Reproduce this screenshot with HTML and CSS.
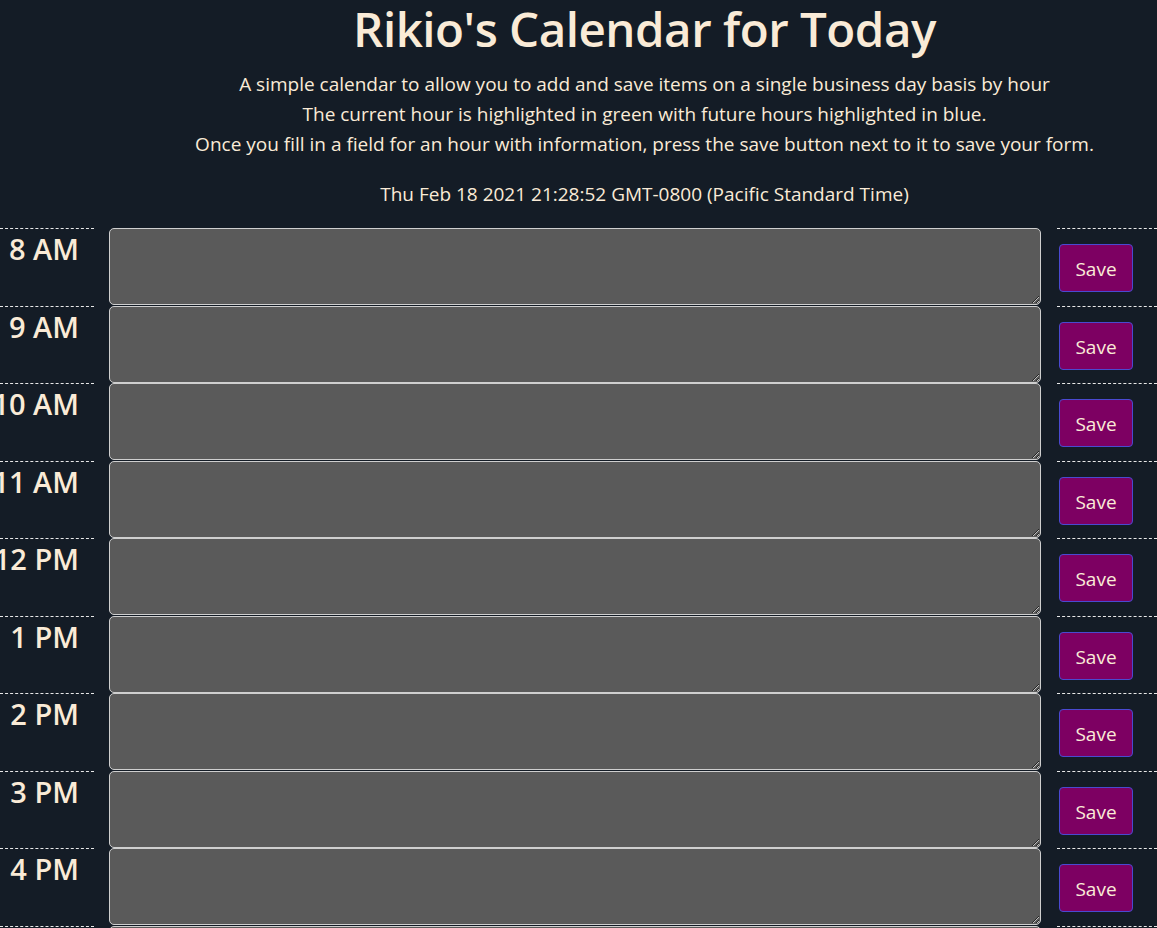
FILE: index.html
```html
<!DOCTYPE html>
<html lang="en">
<head>
<meta charset="utf-8">
<title>Rikio's Calendar</title>
<link rel="stylesheet" href="styles.css">
</head>
<body>
<header class="header">
  <h1 class="title">Rikio's Calendar for Today</h1>
  <p class="lead">A simple calendar to allow you to add and save items on a single business day basis by hour</p>
  <p class="lead">The current hour is highlighted in green with future hours highlighted in blue.</p>
  <p class="lead">Once you fill in a field for an hour with information, press the save button next to it to save your form.</p>
  <p class="date">Thu Feb 18 2021 21:28:52 GMT-0800 (Pacific Standard Time)</p>
</header>
<main class="planner">
  <div class="row"><div class="hour"><span>8 AM</span></div><textarea class="entry"></textarea><div class="save-col"><button class="save">Save</button></div></div>
  <div class="row"><div class="hour"><span>9 AM</span></div><textarea class="entry"></textarea><div class="save-col"><button class="save">Save</button></div></div>
  <div class="row"><div class="hour"><span>10 AM</span></div><textarea class="entry"></textarea><div class="save-col"><button class="save">Save</button></div></div>
  <div class="row"><div class="hour"><span>11 AM</span></div><textarea class="entry"></textarea><div class="save-col"><button class="save">Save</button></div></div>
  <div class="row"><div class="hour"><span>12 PM</span></div><textarea class="entry"></textarea><div class="save-col"><button class="save">Save</button></div></div>
  <div class="row"><div class="hour"><span>1 PM</span></div><textarea class="entry"></textarea><div class="save-col"><button class="save">Save</button></div></div>
  <div class="row"><div class="hour"><span>2 PM</span></div><textarea class="entry"></textarea><div class="save-col"><button class="save">Save</button></div></div>
  <div class="row"><div class="hour"><span>3 PM</span></div><textarea class="entry"></textarea><div class="save-col"><button class="save">Save</button></div></div>
  <div class="row"><div class="hour"><span>4 PM</span></div><textarea class="entry"></textarea><div class="save-col"><button class="save">Save</button></div></div>
  <div class="row"><div class="hour"><span>5 PM</span></div><textarea class="entry"></textarea><div class="save-col"><button class="save">Save</button></div></div>
</main>
</body>
</html>
```
FILE: styles.css
```css
html, body {
  margin: 0;
  padding: 0;
  background: #141c26;
  color: #faebd7;
  font-family: "Open Sans", "Noto Sans", sans-serif;
  overflow: hidden;
}

.header {
  padding-left: 132px;
  text-align: center;
}

.title {
  margin: 0;
  font-size: 47.5px;
  font-weight: 600;
  line-height: 58px;
  letter-spacing: -0.5px;
}

.lead {
  margin: 0;
  font-size: 19px;
  line-height: 30px;
}

.lead:first-of-type {
  margin-top: 11px;
}

.date {
  margin: 20px 0 0;
  font-size: 19px;
  line-height: 30px;
  padding-bottom: 19px;
}

.planner {
  display: flex;
  flex-direction: column;
}

.row {
  display: flex;
  height: 77.5px;
}

.hour {
  width: 94px;
  flex: none;
  box-sizing: border-box;
  border-top: 1px dashed #e8e8e8;
  padding-right: 15px;
  padding-top: 1px;
  display: flex;
  justify-content: flex-end;
  align-items: flex-start;
  white-space: nowrap;
  font-size: 29px;
  font-weight: 600;
  line-height: 38px;
}

.entry {
  flex: 1;
  margin: 0 16px 0 15px;
  box-sizing: border-box;
  height: 77px;
  background: #5a5a5a;
  border: 1px solid #cfcfcf;
  border-radius: 5px;
  color: #faebd7;
  font: inherit;
  padding: 6px 12px;
}

.save-col {
  width: 100px;
  flex: none;
  box-sizing: border-box;
  border-top: 1px dashed #e8e8e8;
  padding: 15px 0 0 2px;
}

.save {
  width: 74px;
  height: 48px;
  background: #7d0062;
  border: 1px solid #4a4ad0;
  border-radius: 4px;
  color: #faebd7;
  font-family: "Open Sans", "Noto Sans", sans-serif;
  font-size: 19px;
  padding: 2px 0 0;
}
```
